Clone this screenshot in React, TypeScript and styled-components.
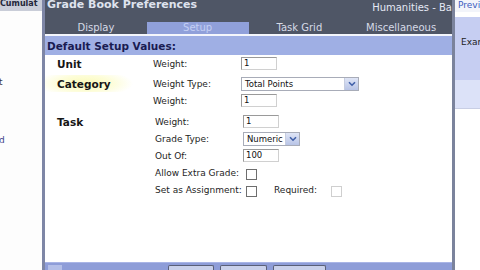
import styled, { createGlobalStyle } from "styled-components"

const GlobalStyle = createGlobalStyle`
  html, body {
    margin: 0;
    padding: 0;
    background: #ffffff;
    overflow: hidden;
  }
  body {
    font-family: "DejaVu Sans", Verdana, sans-serif;
  }
`

type TabProps = { $active?: boolean }
type CheckProps = { $faded?: boolean }
type FieldProps = { $width: number }

const tabs = ["Display", "Setup", "Task Grid", "Miscellaneous"]

export default function App() {
  return (
    <>
      <GlobalStyle />
      <Screen>
        <LeftPane>
          <LeftStrip>Cumulat</LeftStrip>
          <LeftWord $top={66}>t</LeftWord>
          <LeftWord $top={48} $link>d</LeftWord>
        </LeftPane>

        <Dialog>
          <TitleBar>
            <Title>Grade Book Preferences</Title>
            <Course>Humanities - Ba</Course>
          </TitleBar>
          <TabBar>
            {tabs.map((t) => (
              <Tab key={t} $active={t === "Setup"}>{t}</Tab>
            ))}
          </TabBar>
          <SectionHeader>Default Setup Values:</SectionHeader>

          <Content>
            <Section>
              <Heading>Unit</Heading>
              <Rows>
                <Row>
                  <Label>Weight:</Label>
                  <Field $width={36}>1</Field>
                </Row>
              </Rows>
            </Section>

            <Section $gap={3}>
              <Heading $glow>Category</Heading>
              <Rows>
                <Row>
                  <Label>Weight Type:</Label>
                  <Select $width={118}>
                    <span>Total Points</span>
                    <Arrow>
                      <Chevron />
                    </Arrow>
                  </Select>
                </Row>
                <Row>
                  <Label>Weight:</Label>
                  <Field $width={36}>1</Field>
                </Row>
              </Rows>
            </Section>

            <Section $gap={4}>
              <Heading>Task</Heading>
              <Rows $shift={2}>
                <Row>
                  <Label>Weight:</Label>
                  <Field $width={36}>1</Field>
                </Row>
                <Row>
                  <Label>Grade Type:</Label>
                  <Select $width={57}>
                    <span>Numeric</span>
                    <Arrow>
                      <Chevron />
                    </Arrow>
                  </Select>
                </Row>
                <Row>
                  <Label>Out Of:</Label>
                  <Field $width={36}>100</Field>
                </Row>
                <Row>
                  <Label>Allow Extra Grade:</Label>
                  <Check />
                </Row>
                <Row>
                  <Label>Set as Assignment:</Label>
                  <Check />
                  <SubLabel>Required:</SubLabel>
                  <Check $faded />
                </Row>
              </Rows>
            </Section>
          </Content>

          <Footer>
            <FooterTag />
            <FooterButtons>
              <FooterButton style={{ width: 44 }} />
              <FooterButton style={{ width: 45 }} />
              <FooterButton style={{ width: 51 }} />
            </FooterButtons>
          </Footer>
        </Dialog>

        <RightPane>
          <RightTop>Preview</RightTop>
          <RightBox>
            <RightText>Example</RightText>
          </RightBox>
          <RightSoft />
        </RightPane>
      </Screen>
    </>
  )
}

function Chevron() {
  return (
    <svg width="8" height="6" viewBox="0 0 8 6">
      <path d="M1 1.2 L4 4.2 L7 1.2" fill="none" stroke="#3f5fa8" strokeWidth="1.6" />
    </svg>
  )
}

const Screen = styled.div`
  width: 480px;
  height: 270px;
  display: flex;
  overflow: hidden;
  background: #ffffff;
`

const LeftPane = styled.div`
  width: 42px;
  flex-shrink: 0;
  display: flex;
  flex-direction: column;
  overflow: hidden;
  background: #fdfdfd;
`

const LeftStrip = styled.div`
  height: 11px;
  background: #c9cdd8;
  color: #23273a;
  font-size: 8px;
  font-weight: bold;
  line-height: 8px;
  white-space: nowrap;
  overflow: hidden;
`

const LeftWord = styled.div<{ $top: number; $link?: boolean }>`
  margin-top: ${({ $top }) => $top}px;
  margin-left: -1px;
  font-size: 9px;
  color: ${({ $link }) => ($link ? "#3b3f8a" : "#3a3a48")};
  line-height: 10px;
`

const Dialog = styled.div`
  width: 407px;
  flex-shrink: 0;
  display: flex;
  flex-direction: column;
  border-left: 3px solid #7e86a6;
  border-right: 3px solid #7b839c;
  background: #ffffff;
`

const TitleBar = styled.div`
  height: 20px;
  background: #4f5666;
  display: flex;
  align-items: flex-start;
  justify-content: space-between;
  overflow: hidden;
  padding-left: 2px;
`

const Title = styled.div`
  margin-top: -2px;
  font-size: 11px;
  font-weight: bold;
  color: #dfe3ee;
  white-space: nowrap;
`

const Course = styled.div`
  margin-top: 2px;
  font-size: 10px;
  color: #e4e8f4;
  white-space: nowrap;
`

const TabBar = styled.div`
  height: 14px;
  background: #4f5666;
  display: grid;
  grid-template-columns: repeat(4, 1fr);
  align-items: end;
  border-bottom: 2px solid #f4f6fc;
`

const Tab = styled.div<TabProps>`
  height: 12px;
  display: flex;
  align-items: center;
  justify-content: center;
  font-size: 10px;
  line-height: 12px;
  color: ${({ $active }) => ($active ? "#c4cff4" : "#d6dae6")};
  background: ${({ $active }) => ($active ? "#90a0da" : "transparent")};
`

const SectionHeader = styled.div`
  height: 19px;
  display: flex;
  align-items: center;
  padding-left: 2px;
  background: #9fafe4;
  color: #1a1c52;
  font-size: 10.5px;
  font-weight: bold;
`

const Content = styled.div`
  flex: 1;
  display: flex;
  flex-direction: column;
  padding-left: 12px;
`

const Section = styled.div<{ $gap?: number }>`
  display: flex;
  margin-top: ${({ $gap }) => $gap ?? 0}px;
`

const Heading = styled.div<{ $glow?: boolean }>`
  width: 96px;
  flex-shrink: 0;
  height: 17px;
  display: flex;
  align-items: center;
  font-size: 10.5px;
  font-weight: bold;
  color: #161616;
  margin-left: -12px;
  padding-left: 12px;
  background: ${({ $glow }) =>
    $glow
      ? "radial-gradient(ellipse 48px 14px at 40px 50%, #fbfbb8 0%, #fdfdd8 55%, rgba(255,255,255,0) 100%)"
      : "none"};
`

const Rows = styled.div<{ $shift?: number }>`
  display: flex;
  flex-direction: column;
  margin-left: ${({ $shift }) => $shift ?? 0}px;
`

const Row = styled.div`
  height: 17px;
  display: flex;
  align-items: center;
`

const Label = styled.div`
  width: 88px;
  flex-shrink: 0;
  font-size: 9px;
  color: #1e1e1e;
  white-space: nowrap;
`

const SubLabel = styled.div`
  margin-left: 17px;
  width: 54px;
  font-size: 9px;
  color: #1e1e1e;
  white-space: nowrap;
`

const Field = styled.div<FieldProps>`
  width: ${({ $width }) => $width}px;
  height: 13px;
  box-sizing: border-box;
  border: 1px solid #9a9a9a;
  border-bottom-color: #d0d0d0;
  border-right-color: #d0d0d0;
  padding-left: 2px;
  font-size: 8.5px;
  line-height: 11px;
  color: #111;
  background: #fff;
`

const Select = styled.div<FieldProps>`
  width: ${({ $width }) => $width}px;
  height: 14px;
  box-sizing: border-box;
  border: 1px solid #a8acb8;
  display: flex;
  align-items: center;
  justify-content: space-between;
  padding-left: 3px;
  font-size: 8.5px;
  color: #111;
  background: #fff;
`

const Arrow = styled.div`
  width: 13px;
  height: 12px;
  display: flex;
  align-items: center;
  justify-content: center;
  background: linear-gradient(#dfe5f6, #b8c4e6);
  border-left: 1px solid #c6cde0;
`

const Check = styled.div<CheckProps>`
  width: 11px;
  height: 11px;
  box-sizing: border-box;
  margin-left: 3px;
  margin-top: 3px;
  border: 1px solid ${({ $faded }) => ($faded ? "#cfcfcf" : "#6e6e6e")};
  background: #fff;
`

const Footer = styled.div`
  height: 7px;
  display: flex;
  align-items: flex-start;
  background: #8e9dd8;
  border-top: 1px solid #a9b5e6;
  overflow: hidden;
`

const FooterTag = styled.div`
  width: 14px;
  height: 6px;
  margin-left: 3px;
  margin-top: 2px;
  background: #b4bfe8;
`

const FooterButtons = styled.div`
  display: flex;
  gap: 6px;
  margin-left: 106px;
  margin-top: 2px;
`

const FooterButton = styled.div`
  height: 12px;
  border: 1px solid #5a6078;
  border-bottom: none;
  background: #c9d0ea;
  border-radius: 2px 2px 0 0;
`

const RightPane = styled.div`
  flex: 1;
  display: flex;
  flex-direction: column;
  overflow: hidden;
`

const RightTop = styled.div`
  height: 12px;
  background: #f2f4fa;
  color: #3c5cc0;
  font-size: 9px;
  line-height: 11px;
  padding-left: 3px;
  white-space: nowrap;
  margin-bottom: 5px;
`

const RightBox = styled.div`
  height: 63px;
  background: #c6cef2;
  padding-top: 20px;
  box-sizing: border-box;
`

const RightText = styled.div`
  font-size: 9px;
  color: #222;
  padding-left: 6px;
  white-space: nowrap;
`

const RightSoft = styled.div`
  height: 28px;
  background: #dce2f8;
  border-bottom: 1px solid #c8cee4;
`
